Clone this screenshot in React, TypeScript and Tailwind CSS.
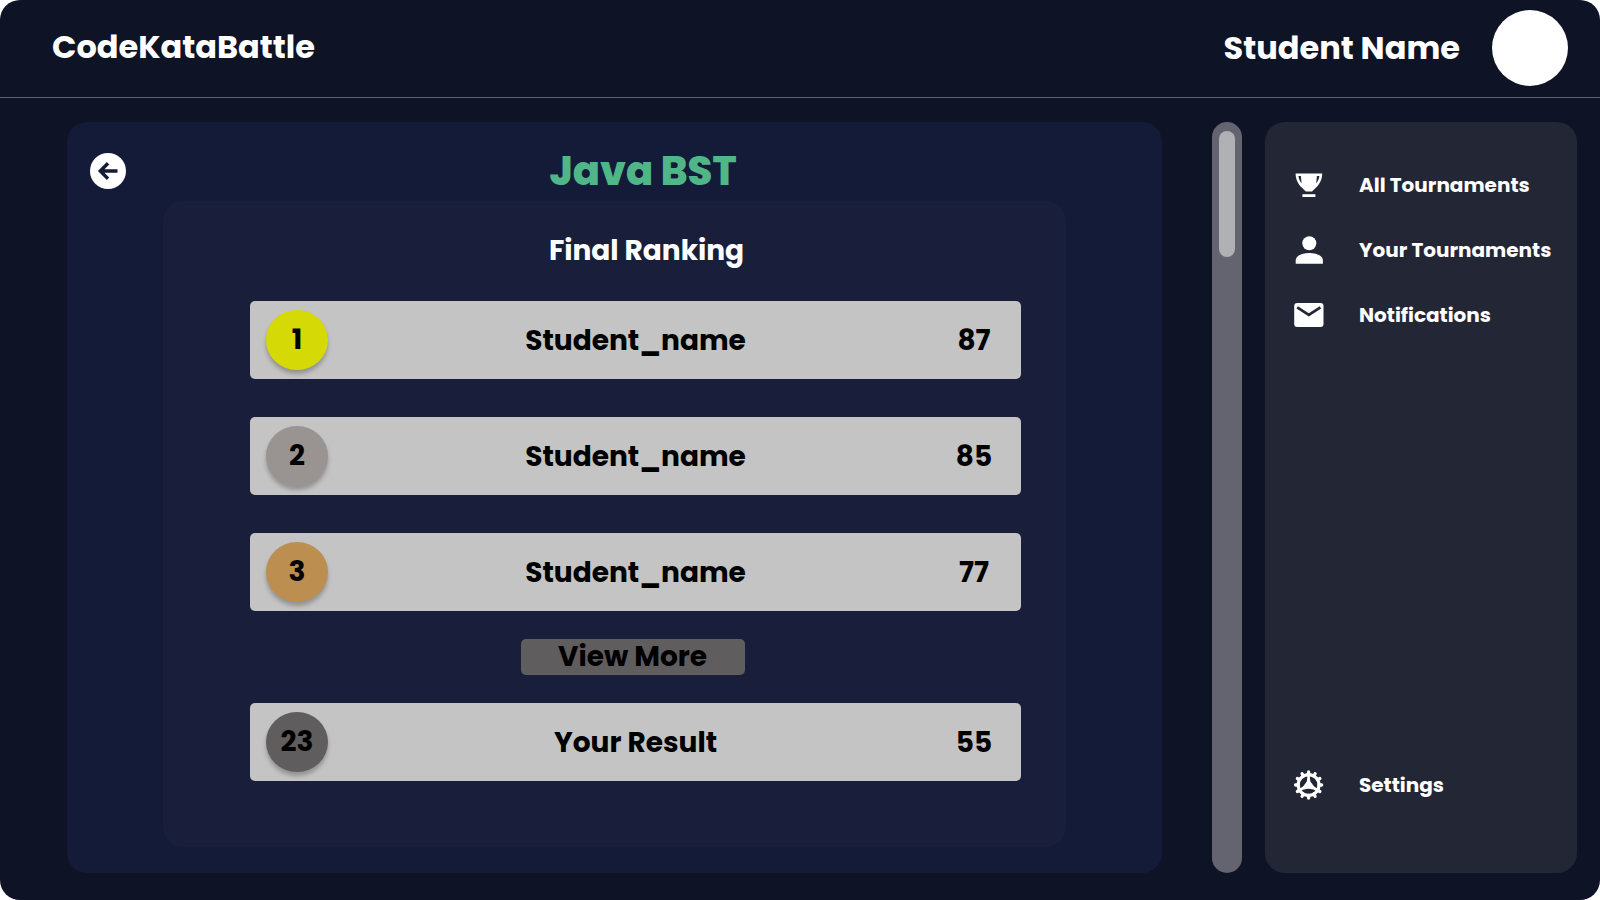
import type { ReactNode } from "react";

type Entry = { rank: number; name: string; score: number; badge: string };

const podium: Entry[] = [
  { rank: 1, name: "Student_name", score: 87, badge: "bg-[#d5d905]" },
  { rank: 2, name: "Student_name", score: 85, badge: "bg-[#999492]" },
  { rank: 3, name: "Student_name", score: 77, badge: "bg-[#bc8e50]" },
];

const ownResult: Entry = { rank: 23, name: "Your Result", score: 55, badge: "bg-[#605d5e]" };

function BackIcon() {
  return (
    <svg viewBox="0 0 36 36" className="size-9" aria-hidden="true">
      <circle cx="18" cy="18" r="18" fill="#fff" />
      <path d="M27.500 18H11M18 10.300 10.300 18l7.700 7.700" fill="none" stroke="#141b38" strokeWidth="3.400" />
    </svg>
  );
}

function TrophyIcon() {
  return (
    <svg viewBox="0 0 30 30" className="size-[30px]" fill="#fff" aria-hidden="true">
      <path
        fillRule="evenodd"
        d="M1.600 3.600h26.600c0 5.800-2.600 11-6.400 14.200l-3.800 3.800h-6.200L8 17.800C4.200 14.600 1.600 9.400 1.600 3.600ZM4.400 6c.5 3 1.500 5.400 3.200 7.400L6.900 6ZM25.400 6h-2.500l-.7 7.400c1.700-2 2.700-4.400 3.200-7.400Z"
      />
      <path d="M8.400 24.200h13v2.800h-13z" />
    </svg>
  );
}

function PersonIcon() {
  return (
    <svg viewBox="0 0 30 30" className="size-[30px]" fill="#fff" aria-hidden="true">
      <circle cx="15.300" cy="8.300" r="7" />
      <path d="M1.700 28.700v-3.200c0-4.800 6.400-7.500 13.600-7.500s13.600 2.700 13.600 7.500v3.200Z" />
    </svg>
  );
}

function MailIcon() {
  return (
    <svg viewBox="0 0 30 30" className="size-[30px]" aria-hidden="true">
      <rect x="0.200" y="3" width="29.300" height="24" rx="3" fill="#fff" />
      <path d="m3.200 7.300 11.600 7.600 11.600-7.600" fill="none" stroke="#232635" strokeWidth="2.700" />
    </svg>
  );
}

function GearIcon() {
  const teeth = Array.from({ length: 12 }, (_, i) => i * 30);
  return (
    <svg viewBox="0 0 30 30" className="size-[30px]" aria-hidden="true">
      <g stroke="#fff" fill="none">
        <circle cx="14.600" cy="15" r="10.400" strokeWidth="3.200" />
        {teeth.map((angle) => (
          <path key={angle} d="M14.600 4.500V2" strokeWidth="3.300" strokeLinecap="round" transform={`rotate(${angle} 14.6 15)`} />
        ))}
        <path d="M14.600 15V5M14.600 15l-8.700 5M14.600 15l8.700 5" strokeWidth="2.600" />
      </g>
      <path d="M13.400 8h2.400l.6 3.600 4.400 6-1.800 2c-2.800-1-6-1-8.800 0l-1.800-2 4.400-6Z" fill="#fff" />
    </svg>
  );
}

function MenuLink({ icon, children }: { icon: ReactNode; children: ReactNode }) {
  return (
    <a href="#" className="flex h-10 items-center gap-[35px] whitespace-nowrap">
      {icon}
      {children}
    </a>
  );
}

function RankRow({ rank, name, score, badge }: Entry) {
  return (
    <li className="grid h-[78px] grid-cols-[62px_1fr_62px] items-center rounded-[5px] bg-[#c4c4c4] px-4 text-center">
      <span
        className={`flex h-[60px] items-center justify-center rounded-[50%] shadow-[0_4px_4px_rgba(0,0,0,0.25)] ${badge}`}
      >
        {rank}
      </span>
      <span className="pt-0.5">{name}</span>
      <span className="pt-0.5">{score}</span>
    </li>
  );
}

export default function App() {
  return (
    <div className="flex min-h-screen flex-col rounded-[20px] bg-[#0e1325] font-['Poppins','Inter',sans-serif] font-bold text-white">
      <header className="flex items-center justify-between border-b border-[#5f6169] pt-[10px] pr-8 pb-[11px] pl-[52px] text-[32px] leading-10">
        <span className="pb-0.5">CodeKataBattle</span>
        <div className="flex items-center gap-8">
          <span>Student Name</span>
          <span className="size-[76px] rounded-full bg-white" />
        </div>
      </header>

      <div className="flex grow pt-6 pr-[23px] pb-[27px] pl-[67px]">
        <main className="flex grow flex-col rounded-[20px] bg-[#141b38] pt-[25px] pb-[26px]">
          <div className="flex items-center pr-0.5 pl-[23px]">
            <button type="button" aria-label="Back">
              <BackIcon />
            </button>
            <h1 className="grow text-center text-[40px] leading-[48px] font-extrabold text-[#50b687]">Java BST</h1>
          </div>

          <section className="mx-24 mt-[6px] grow rounded-[20px] bg-[#191f3b] pt-8 pr-[45px] pl-[87px] text-[28px] leading-9">
            <h2 className="pl-[22px] text-center">Final Ranking</h2>
            <ol className="mt-8 flex flex-col gap-[38px] text-black">
              {podium.map((entry) => (
                <RankRow key={entry.rank} {...entry} />
              ))}
            </ol>
            <div className="mt-7 flex justify-center pr-1.5">
              <button type="button" className="w-56 rounded-[5px] bg-[#605d5e] text-black">
                View More
              </button>
            </div>
            <ol start={ownResult.rank} className="mt-7 text-black">
              <RankRow {...ownResult} />
            </ol>
          </section>
        </main>

        <div className="ml-[50px] w-[30px] shrink-0 rounded-full bg-[#63646f] px-[7px] py-[9px]">
          <div className="h-[126px] rounded-full bg-[#b0b1b5]" />
        </div>

        <nav className="ml-[23px] flex w-[312px] shrink-0 flex-col justify-between rounded-[20px] bg-[#232635] pt-[43px] pb-[68px] pl-[29px] text-[20px] leading-6">
          <div className="flex flex-col gap-[25px]">
            <MenuLink icon={<TrophyIcon />}>All Tournaments</MenuLink>
            <MenuLink icon={<PersonIcon />}>Your Tournaments</MenuLink>
            <MenuLink icon={<MailIcon />}>Notifications</MenuLink>
          </div>
          <MenuLink icon={<GearIcon />}>Settings</MenuLink>
        </nav>
      </div>
    </div>
  );
}
